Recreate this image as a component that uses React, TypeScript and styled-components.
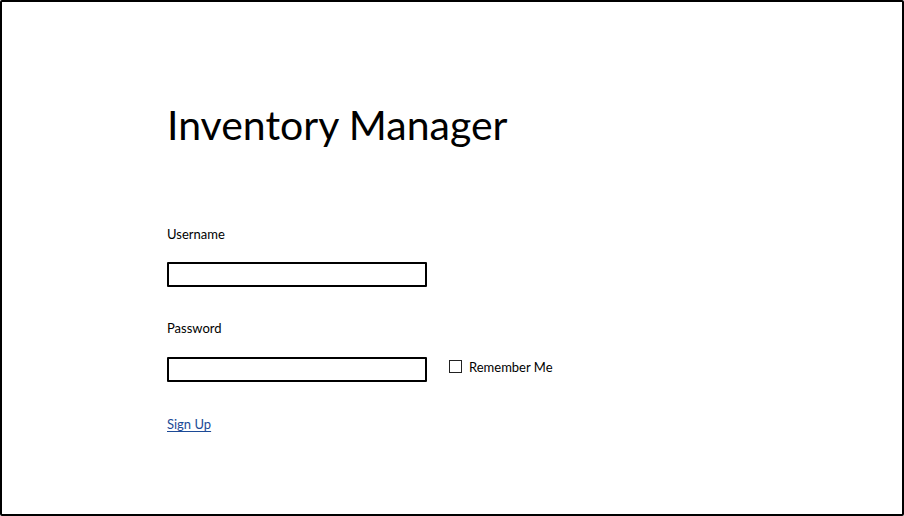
import React from 'react'
import styled, { createGlobalStyle } from 'styled-components'

const GlobalStyle = createGlobalStyle`
  html, body {
    margin: 0;
    padding: 0;
    background: #ffffff;
  }
  body {
    font-family: 'Lato', 'Open Sans', sans-serif;
    color: #000000;
  }
`

const Frame = styled.div`
  box-sizing: border-box;
  width: 904px;
  height: 516px;
  border: 2px solid #000;
  border-radius: 2px;
  padding: 100px 0 0 165px;
  display: flex;
  flex-direction: column;
`

const Title = styled.h1`
  margin: 0;
  font-family: 'Lato', sans-serif;
  font-weight: 400;
  font-size: 41px;
  line-height: 46px;
  letter-spacing: 0;
`

const Label = styled.label<{ $top: number }>`
  margin-top: ${p => p.$top}px;
  font-size: 13px;
  line-height: 16px;
  height: 16px;
`

const Row = styled.div<{ $top: number }>`
  margin-top: ${p => p.$top}px;
  display: flex;
  align-items: center;
  gap: 22px;
`

const Field = styled.div`
  box-sizing: border-box;
  width: 260px;
  height: 25px;
  border: 2px solid #000;
  border-radius: 1px;
  background: #fff;
`

const Check = styled.label`
  display: flex;
  align-items: center;
  gap: 7px;
  font-size: 13px;
  margin-top: -6px;
`

const Box = styled.span`
  box-sizing: border-box;
  width: 13px;
  height: 13px;
  border: 1px solid #222;
  background: #fff;
`

const Link = styled.a`
  margin-top: 34px;
  align-self: flex-start;
  font-size: 13px;
  line-height: 16px;
  color: #1c4a96;
  text-decoration: underline;
  text-underline-offset: 2px;
  cursor: pointer;
`

const App: React.FC = () => {
  return (
    <>
      <GlobalStyle />
      <Frame>
        <Title>Inventory Manager</Title>
        <Label $top={78}>Username</Label>
        <Row $top={20}>
          <Field />
        </Row>
        <Label $top={33}>Password</Label>
        <Row $top={21}>
          <Field />
          <Check>
            <Box />
            Remember Me
          </Check>
        </Row>
        <Link>Sign Up</Link>
      </Frame>
    </>
  )
}

export default App
